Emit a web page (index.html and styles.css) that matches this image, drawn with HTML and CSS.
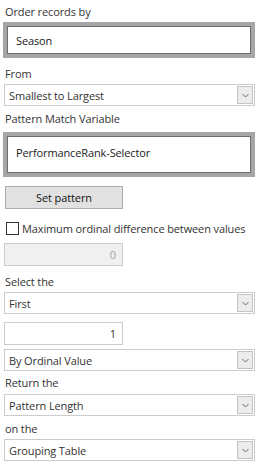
FILE: index.html
```html
<!DOCTYPE html>
<html>
<head>
<meta charset="utf-8">
<link rel="stylesheet" href="styles.css">
</head>
<body>
<div class="panel">
  <div class="label first">Order records by</div>
  <div class="bigbox b1"><span>Season</span></div>
  <div class="label l-from">From</div>
  <div class="select"><span>Smallest to Largest</span><i class="drop"><svg width="7" height="5" viewBox="0 0 7 5"><path d="M0.5 1 L3.5 4 L6.5 1" fill="none" stroke="#666" stroke-width="1"/></svg></i></div>
  <div class="label l-pmv">Pattern Match Variable</div>
  <div class="bigbox b2"><span>PerformanceRank-Selector</span></div>
  <div class="btn">Set pattern</div>
  <label class="check"><span class="box"></span><span>Maximum ordinal difference between values</span></label>
  <div class="num disabled">0</div>
  <div class="label l-sel">Select the</div>
  <div class="select"><span>First</span><i class="drop"><svg width="7" height="5" viewBox="0 0 7 5"><path d="M0.5 1 L3.5 4 L6.5 1" fill="none" stroke="#666" stroke-width="1"/></svg></i></div>
  <div class="num n1">1</div>
  <div class="select s-ord"><span>By Ordinal Value</span><i class="drop"><svg width="7" height="5" viewBox="0 0 7 5"><path d="M0.5 1 L3.5 4 L6.5 1" fill="none" stroke="#666" stroke-width="1"/></svg></i></div>
  <div class="label l-ret">Return the</div>
  <div class="select s-ret"><span>Pattern Length</span><i class="drop"><svg width="7" height="5" viewBox="0 0 7 5"><path d="M0.5 1 L3.5 4 L6.5 1" fill="none" stroke="#666" stroke-width="1"/></svg></i></div>
  <div class="label l-on">on the</div>
  <div class="select"><span>Grouping Table</span><i class="drop"><svg width="7" height="5" viewBox="0 0 7 5"><path d="M0.5 1 L3.5 4 L6.5 1" fill="none" stroke="#666" stroke-width="1"/></svg></i></div>
</div>
</body>
</html>
```
FILE: styles.css
```css
html, body {
  margin: 0;
  padding: 0;
  background: #ffffff;
}
body {
  font-family: "Open Sans", "Noto Sans", sans-serif;
  font-size: 11px;
  letter-spacing: -0.12px;
  color: #333333;
}
.panel {
  display: flex;
  flex-direction: column;
  align-items: flex-start;
  padding: 0 11px 0 4px;
  width: 251px;
}
.label {
  height: 16px;
  line-height: 16px;
  margin-left: 1px;
  color: #333;
}
.first { margin-top: 4px; }
.l-from { margin-top: 8px; }
.l-pmv { margin-top: 5px; }
.l-sel { margin-top: 8px; }
.l-ret { margin-top: 4px; }
.l-on { margin-top: 5px; }

.bigbox {
  box-sizing: border-box;
  width: 252px;
  margin-left: -1px;
  border: 4px solid #a6a6a6;
  box-shadow: inset 0 0 0 1px #6e6e6e;
  background: #fff;
  display: flex;
  align-items: center;
  padding-left: 9px;
  color: #222;
}
.b1 { height: 36px; margin-top: 2px; }
.b2 { height: 45px; margin-top: 5px; padding-bottom: 4px; }

.select {
  box-sizing: border-box;
  width: 251px;
  height: 22px;
  margin-top: 2px;
  border: 1px solid #cccccc;
  background: #fff;
  display: flex;
  align-items: center;
  justify-content: space-between;
  padding-left: 4px;
  color: #333;
}
.s-ord { margin-top: 4px; }
.s-ret { margin-top: 3px; }
.drop {
  box-sizing: border-box;
  width: 16px;
  height: 18px;
  margin-right: 1px;
  border: 1px solid #c3c3c3;
  background: #ececec;
  display: flex;
  align-items: center;
  justify-content: center;
}

.btn {
  box-sizing: border-box;
  width: 118px;
  height: 23px;
  margin-top: 9px;
  margin-left: 1px;
  border: 1px solid #adadad;
  background: #e1e1e1;
  display: flex;
  align-items: center;
  justify-content: center;
  color: #111;
}

.check {
  display: flex;
  align-items: center;
  height: 16px;
  margin-top: 11px;
  margin-left: 2px;
  gap: 3px;
  color: #333;
}
.check .box {
  box-sizing: border-box;
  width: 13px;
  height: 13px;
  border: 1px solid #333;
  background: #fff;
}

.num {
  box-sizing: border-box;
  width: 119px;
  height: 23px;
  border: 1px solid #cccccc;
  background: #fff;
  text-align: right;
  line-height: 21px;
  padding-right: 6px;
  color: #333;
}
.disabled {
  margin-top: 7px;
  background: #f0f0f0;
  color: #a0a0a0;
}
.n1 { margin-top: 8px; }
```
